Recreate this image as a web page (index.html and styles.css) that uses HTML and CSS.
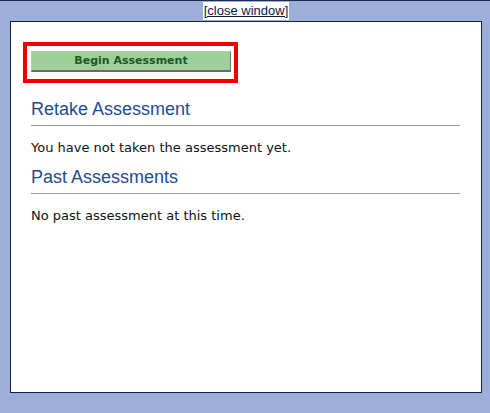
FILE: index.html
```html
<!DOCTYPE html>
<html>
<head>
<meta charset="utf-8">
<link rel="stylesheet" href="styles.css">
</head>
<body>
<div class="topbar"><a class="close-link" href="#">[close window]</a></div>
<div class="panel">
  <div class="highlight">
    <button class="begin-btn">Begin Assessment</button>
  </div>
  <h2 class="section-title first">Retake Assessment</h2>
  <p class="section-text">You have not taken the assessment yet.</p>
  <h2 class="section-title">Past Assessments</h2>
  <p class="section-text">No past assessment at this time.</p>
</div>
</body>
</html>
```

FILE: styles.css
```css
html, body {
  margin: 0;
  padding: 0;
}
body {
  background: #9dafd9;
  border-top: 1px solid #1b2b55;
  height: 412px;
  font-family: "DejaVu Sans", Verdana, sans-serif;
}
.topbar {
  height: 20px;
  display: flex;
  justify-content: center;
  align-items: flex-start;
  padding-left: 2px;
}
.close-link {
  margin-top: 1px;
  background: #ffffff;
  color: #0c1c42;
  font-family: "Liberation Sans", Arial, sans-serif;
  font-size: 13px;
  line-height: 18px;
  padding: 0 1px;
  text-decoration: underline;
}
.panel {
  box-sizing: border-box;
  width: 472px;
  height: 372px;
  margin-left: 10px;
  background: #ffffff;
  border: 1px solid #0f2147;
  padding: 20px 21px 0 12px;
}
.highlight {
  box-sizing: border-box;
  width: 215px;
  height: 41px;
  border: 4px solid #ee0000;
  padding: 5px 3px 0 4px;
}
.begin-btn {
  display: block;
  box-sizing: border-box;
  width: 200px;
  height: 21px;
  margin: 0;
  padding: 0;
  background: #a0cf9b;
  border: 1px solid #a9d4a4;
  border-right-color: #6f7d6e;
  border-bottom: 2px solid #646e63;
  color: #1a5a22;
  font-family: "DejaVu Sans", Verdana, sans-serif;
  font-weight: bold;
  font-size: 11px;
  line-height: 18px;
  text-align: center;
}
.section-title {
  margin: 11px 0 0 8px;
  padding-bottom: 5px;
  border-bottom: 1px solid #999999;
  font-family: "Liberation Sans", Arial, sans-serif;
  font-weight: normal;
  font-size: 18px;
  line-height: 21px;
  color: #1f4c8f;
}
.section-title.first {
  margin-top: 16px;
}
.section-text {
  margin: 14px 0 0 8px;
  font-size: 13px;
  line-height: 16px;
  color: #111111;
}
```
